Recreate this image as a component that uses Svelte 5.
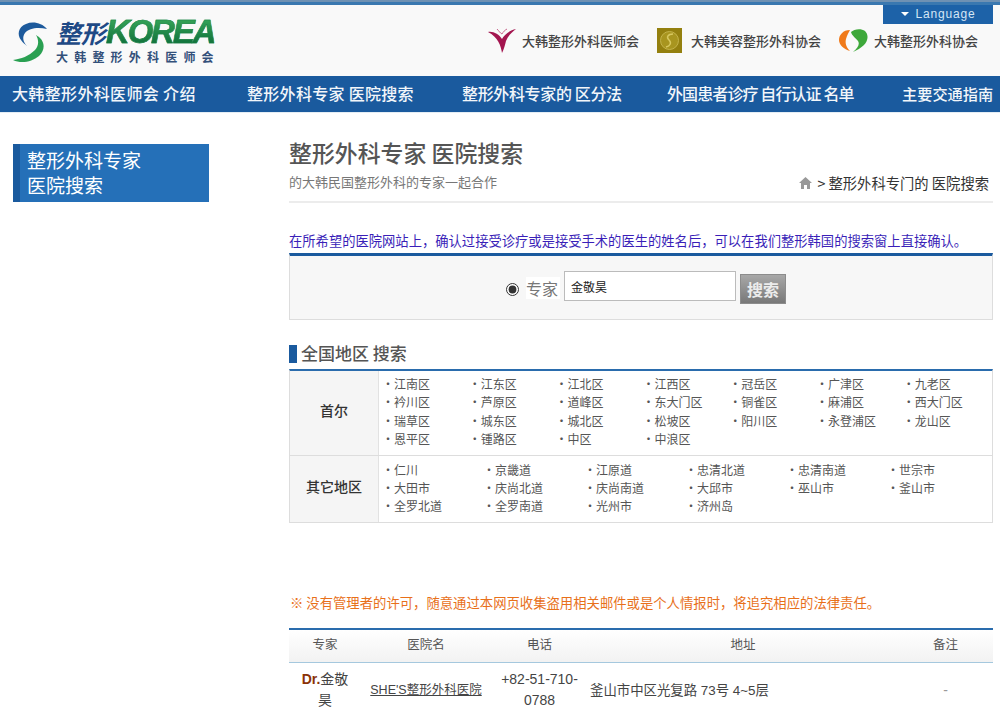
<script>
  const navItems = ['大韩整形外科医师会 介绍', '整形外科专家 医院搜索', '整形外科专家的 区分法', '外国患者诊疗 自行认证 名单', '主要交通指南'];

  const seoul = [
    '江南区', '江东区', '江北区', '江西区', '冠岳区', '广津区', '九老区',
    '衿川区', '芦原区', '道峰区', '东大门区', '铜雀区', '麻浦区', '西大门区',
    '瑞草区', '城东区', '城北区', '松坡区', '阳川区', '永登浦区', '龙山区',
    '恩平区', '锺路区', '中区', '中浪区'
  ];

  const others = [
    '仁川', '京畿道', '江原道', '忠清北道', '忠清南道', '世宗市',
    '大田市', '庆尚北道', '庆尚南道', '大邱市', '巫山市', '釜山市',
    '全罗北道', '全罗南道', '光州市', '济州岛'
  ];
</script>

<div class="page">
  <header class="header">
    <a class="lang" href="#top"><span class="caret"></span>Language</a>

    <div class="logo">
      <svg class="swirl" width="36" height="42" viewBox="0 0 36 42">
        <path d="M35 8C30 2 21 0 14 3C6 6 5 14 9 19C11 22 13 23 15 25C11 21 10 16 13 12C17 7 26 6 35 8Z" fill="#1d5a9c"/>
        <path d="M1 39C9 43 20 41 27 35C33 29 33 22 28 17C26 15 25 15 24 14C27 19 27 25 23 29C17 35 9 38 1 39Z" fill="#2aa052"/>
      </svg>
      <div class="logo-text">
        <div class="logo-main"><span class="logo-cn">整形</span><span class="logo-en">KOREA</span></div>
        <div class="logo-sub">大韩整形外科医师会</div>
      </div>
    </div>

    <div class="partners">
      <div class="partner">
        <svg width="28" height="25" viewBox="0 0 28 25">
          <path d="M0 4C5 3 11 6 14 11C16 7 22 2 28 1C24 4 20 8 18 13C17 17 16 21 14 25C13 18 10 9 0 4Z" fill="#a3154f"/>
          <path d="M9 1C11 3 12 5 14 6C15 4 17 2 19 1" fill="none" stroke="#c86a90" stroke-width="1"/>
        </svg>
        <span>大韩整形外科医师会</span>
      </div>
      <div class="partner">
        <svg width="25" height="25" viewBox="0 0 25 25">
          <rect width="25" height="25" fill="#94800f"/>
          <circle cx="12.500" cy="12.500" r="9" fill="#a8951f" stroke="#c4b34a"/>
          <path d="M16 6C11 6 9 9 12 12C15 15 13 18 9 19" fill="none" stroke="#d8c860" stroke-width="1.500"/>
        </svg>
        <span>大韩美容整形外科协会</span>
      </div>
      <div class="partner tight">
        <svg width="29" height="23" viewBox="0 0 29 23">
          <path d="M11 1C4 1 0 6 0 11C0 16 5 20 11 22C7 18 6 14 7 10C8 6 10 3 11 1Z" fill="#f07a1a"/>
          <path d="M12 3C15 0 22 -1 26 2C30 6 29 12 25 16C22 19 18 21 14 23C19 19 21 15 19 12C17 9 13 7 12 3Z" fill="#3da83a"/>
        </svg>
        <span>大韩整形外科协会</span>
      </div>
    </div>
  </header>

  <nav class="nav">
    {#each navItems as item}
      <a href="#top">{item}</a>
    {/each}
  </nav>

  <div class="body">
    <aside class="side">整形外科专家<br />医院搜索</aside>

    <main class="main">
      <div class="title-row">
        <div>
          <h1>整形外科专家 医院搜索</h1>
          <p class="sub">的大韩民国整形外科的专家一起合作</p>
        </div>
        <div class="crumb">
          <svg width="13" height="12" viewBox="0 0 13 12">
            <path d="M6.500 0L13 6H11V12H8V8H5V12H2V6H0Z" fill="#999"/>
          </svg>
          <span>&gt; 整形外科专门的 医院搜索</span>
        </div>
      </div>

      <p class="notice">在所希望的医院网站上，确认过接受诊疗或是接受手术的医生的姓名后，可以在我们整形韩国的搜索窗上直接确认。</p>

      <div class="search">
        <input class="radio" type="radio" checked />
        <span class="search-label">专家</span>
        <input class="field" type="text" value="金敬昊" />
        <button class="btn" type="button">搜索</button>
      </div>

      <h2 class="section">全国地区 搜索</h2>

      <div class="regions">
        <div class="region">
          <div class="region-name">首尔</div>
          <ul class="list seven">
            {#each seoul as name}
              <li>{name}</li>
            {/each}
          </ul>
        </div>
        <div class="region">
          <div class="region-name">其它地区</div>
          <ul class="list six">
            {#each others as name}
              <li>{name}</li>
            {/each}
          </ul>
        </div>
      </div>

      <p class="warn">※ 没有管理者的许可，随意通过本网页收集盗用相关邮件或是个人情报时，将追究相应的法律责任。</p>

      <table class="result">
        <colgroup>
          <col style="width: 72px" />
          <col style="width: 130px" />
          <col style="width: 97px" />
          <col style="width: 310px" />
          <col />
        </colgroup>
        <thead>
          <tr>
            <th>专家</th>
            <th>医院名</th>
            <th>电话</th>
            <th>地址</th>
            <th>备注</th>
          </tr>
        </thead>
        <tbody>
          <tr>
            <td><b class="dr">Dr.</b>金敬昊</td>
            <td><a href="#top">SHE'S整形外科医院</a></td>
            <td>+82-51-710-0788</td>
            <td class="addr">釜山市中区光复路 73号 4~5层</td>
            <td class="dash">-</td>
          </tr>
        </tbody>
      </table>
    </main>
  </div>
</div>

<style>
  :global(body) {
    margin: 0;
    background: #fff;
    overflow: hidden;
  }

  .page {
    width: 1000px;
    height: 711px;
    overflow: hidden;
    font-family: "Noto Sans CJK SC", "Liberation Sans", sans-serif;
    color: #444;
  }

  a {
    color: inherit;
    text-decoration: none;
  }

  .header {
    position: relative;
    box-sizing: border-box;
    height: 76px;
    display: flex;
    justify-content: space-between;
    background: #f9f9f9;
    border-top: 2px solid #6f91b3;
    box-shadow: inset 0 3px 0 #3a78b0;
  }

  .lang {
    position: absolute;
    top: 3px;
    right: 7px;
    box-sizing: border-box;
    width: 110px;
    height: 19px;
    padding-bottom: 2px;
    display: flex;
    align-items: center;
    justify-content: center;
    gap: 7px;
    background: #1d62a8;
    color: #d5e6f5;
    font-family: "Liberation Sans", sans-serif;
    font-size: 12px;
    letter-spacing: 0.8px;
  }

  .caret {
    border-left: 4px solid transparent;
    border-right: 4px solid transparent;
    border-top: 4px solid #fff;
  }

  .logo {
    display: flex;
    align-items: flex-start;
    gap: 1px;
    padding: 15px 0 0 12px;
  }

  .swirl {
    margin-top: 4px;
    flex: none;
  }

  .logo-text {
    margin-left: 7px;
  }

  .logo-main {
    display: flex;
    align-items: baseline;
    height: 30px;
    line-height: 30px;
  }

  .logo-cn {
    font-size: 25px;
    font-weight: 700;
    font-style: italic;
    color: #1f4a86;
  }

  .logo-en {
    font-family: "Liberation Sans", sans-serif;
    font-size: 33px;
    font-weight: 700;
    font-style: italic;
    letter-spacing: -2.200px;
    background: linear-gradient(#38a85a, #0c6b38);
    -webkit-background-clip: text;
    background-clip: text;
    color: transparent;
    -webkit-text-stroke: 0.5px #1a8346;
  }

  .logo-sub {
    margin-top: 2px;
    font-size: 12px;
    line-height: 16px;
    font-weight: 700;
    letter-spacing: 6.200px;
    color: #33507a;
    white-space: nowrap;
  }

  .partners {
    display: flex;
    align-items: center;
    gap: 18px;
    padding: 3px 22px 0 0;
    font-size: 13px;
    font-weight: 500;
    color: #444;
  }

  .partner {
    display: flex;
    align-items: center;
    gap: 6px;
    white-space: nowrap;
  }

  .partner:nth-child(2) {
    gap: 9px;
  }

  .nav {
    box-sizing: border-box;
    height: 36px;
    display: grid;
    grid-template-columns: 235px 215px 205px 235px 1fr;
    align-items: center;
    padding: 0 0 3px 12px;
    background: #1a5a9e;
    color: #f2f6fa;
    font-size: 16px;
    font-weight: 500;
    white-space: nowrap;
    box-shadow: 0 1px 0 #e4edf4;
  }

  .nav a:nth-child(1) {
    letter-spacing: 0.35px;
  }

  .nav a:nth-child(2) {
    letter-spacing: 0.3px;
  }

  .nav a:nth-child(3) {
    letter-spacing: -0.35px;
  }

  .nav a:nth-child(4) {
    letter-spacing: -0.9px;
  }

  .nav a:nth-child(5) {
    font-size: 15.200px;
  }

  .body {
    display: flex;
    align-items: flex-start;
  }

  .side {
    box-sizing: border-box;
    width: 196px;
    height: 58px;
    flex: none;
    margin: 32px 0 0 13px;
    padding: 3px 0 0 7px;
    background: #2570b8;
    border-left: 7px solid #1a5a9e;
    color: #fff;
    font-size: 19px;
    line-height: 25px;
  }

  .main {
    width: 704px;
    flex: none;
    margin: 28px 0 0 80px;
  }

  .title-row {
    box-sizing: border-box;
    height: 63px;
    display: flex;
    justify-content: space-between;
    align-items: flex-end;
    border-bottom: 2px solid #ececec;
    padding: 0 4px 9px 0;
  }

  h1 {
    margin: 0;
    font-size: 22.900px;
    line-height: 30px;
    font-weight: 500;
    color: #555;
  }

  .sub {
    margin: 5px 0 0;
    font-size: 13px;
    line-height: 20px;
    color: #777;
  }

  .crumb {
    display: flex;
    align-items: center;
    gap: 5px;
    margin-bottom: -1px;
    font-size: 14.300px;
    line-height: 20px;
    color: #333;
  }

  .notice {
    margin: 28px 0 0;
    font-size: 13.300px;
    line-height: 20px;
    color: #3a1fb8;
    white-space: nowrap;
  }

  .search {
    box-sizing: border-box;
    height: 67px;
    margin-top: 2px;
    display: flex;
    align-items: center;
    padding-left: 216px;
    background: #f7f7f7;
    border: 1px solid #ddd;
    border-top: 3px solid #1a5a9e;
  }

  .radio {
    width: 13px;
    height: 13px;
    margin: 3px 7px 0 0;
    accent-color: #333;
  }

  .search-label {
    font-size: 16px;
    line-height: 22px;
    padding-right: 2px;
    color: #777;
    background: #fff;
  }

  .field {
    box-sizing: border-box;
    width: 172px;
    height: 30px;
    margin: 0 4px 3px 4px;
    padding: 0 6px;
    border: 1px solid #bbb;
    background: #fff;
    font: 12px "Noto Sans CJK SC", sans-serif;
    color: #222;
  }

  .btn {
    box-sizing: border-box;
    width: 46px;
    height: 30px;
    margin-top: 2px;
    padding: 0;
    border: 1px solid #8c8c8c;
    background: linear-gradient(#a8a8a8, #787878);
    color: #ececec;
    font: 700 16px "Noto Sans CJK SC", sans-serif;
  }

  .section {
    margin: 22px 0 0;
    padding-left: 12px;
    position: relative;
    font-size: 17px;
    line-height: 21px;
    font-weight: 500;
    color: #555;
  }

  .section::before {
    content: '';
    position: absolute;
    left: 0;
    top: 3px;
    width: 8px;
    height: 18px;
    background: #1a5a9e;
  }

  .regions {
    margin-top: 6px;
    border-top: 2px solid #2a6cad;
    border-right: 1px solid #ddd;
    border-bottom: 1px solid #ddd;
    border-left: 1px solid #ddd;
  }

  .region {
    display: flex;
  }

  .region + .region {
    border-top: 1px solid #ddd;
  }

  .region + .region .list {
    padding-top: 5px;
  }

  .region-name {
    box-sizing: border-box;
    width: 89px;
    flex: none;
    display: flex;
    align-items: center;
    justify-content: center;
    padding-bottom: 5px;
    background: #f5f5f5;
    border-right: 1px solid #e2e2e2;
    font-size: 14px;
    font-weight: 500;
    color: #333;
  }

  .list {
    display: grid;
    align-content: start;
    margin: 0;
    padding: 4px 0 6px 3px;
    list-style: none;
    font-size: 12px;
    line-height: 18.400px;
    color: #555;
  }

  .seven {
    grid-template-columns: repeat(7, 86.800px);
  }

  .six {
    grid-template-columns: repeat(6, 101px);
  }

  .list li {
    white-space: nowrap;
  }

  .list li::before {
    content: '·';
    display: inline-block;
    width: 12px;
  }

  .warn {
    margin: 70px 0 0 1px;
    font-size: 13.350px;
    line-height: 20px;
    color: #e8701a;
    white-space: nowrap;
  }

  .result {
    width: 100%;
    margin-top: 15px;
    border-collapse: collapse;
    table-layout: fixed;
    border-top: 2px solid #2a6cad;
  }

  .result th {
    box-sizing: border-box;
    height: 34px;
    padding: 0 0 5px;
    font-size: 12.500px;
    font-weight: 400;
    color: #555;
    background: linear-gradient(#fff, #f2f2f2);
    border-bottom: 1px solid #a5c8de;
  }

  .result td {
    padding: 6px 6px 4px;
    text-align: center;
    font-family: "Liberation Sans", "Noto Sans CJK SC", sans-serif;
    font-size: 14px;
    line-height: 21px;
    color: #444;
  }

  .dr {
    color: #8a3206;
  }

  .result a {
    font-size: 12.500px;
    text-decoration: underline;
  }

  .result .addr {
    text-align: left;
    padding-left: 2px;
    font-size: 13.400px;
  }

  .result .dash {
    color: #999;
  }
</style>
